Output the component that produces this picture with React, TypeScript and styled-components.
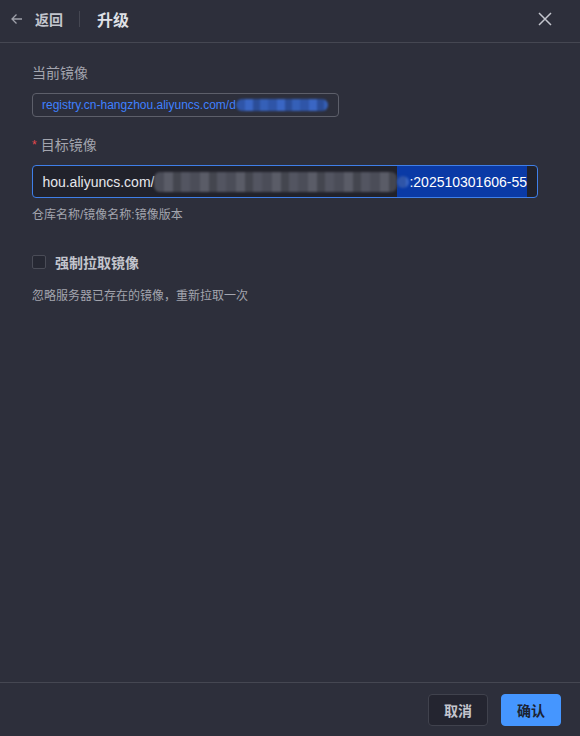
import styled, { createGlobalStyle } from "styled-components";

const GlobalStyle = createGlobalStyle`
    html, body {
        margin: 0;
        padding: 0;
        background: #2d2f3b;
    }
    #root {
        height: 736px;
    }
    * {
        box-sizing: border-box;
    }
`;

const Drawer = styled.div`
    height: 736px;
    display: flex;
    flex-direction: column;
    background-color: #2d2f3b;
    font-family: "Liberation Sans", "Noto Sans CJK SC", sans-serif;
    color: #c9cbd3;
`;

const Header = styled.div`
    height: 43px;
    flex-shrink: 0;
    display: flex;
    align-items: center;
    padding: 0 10px 4px 10px;
    border-bottom: 1px solid #454752;
`;

const BackLink = styled.div`
    display: flex;
    align-items: center;
    gap: 11px;
    font-size: 14px;
    font-weight: bold;
    color: #c3c5cd;
`;

const Divider = styled.div`
    width: 1px;
    height: 16px;
    background-color: #454752;
    margin: 0 17px 0 16px;
`;

const Title = styled.h2`
    margin: 0;
    font-size: 16px;
    font-weight: bold;
    color: #dfe0e6;
    flex: 1;
`;

const CloseButton = styled.div`
    width: 16px;
    height: 16px;
    margin-right: 17px;
    display: flex;
    align-items: center;
    justify-content: center;
`;

const Body = styled.div`
    flex: 1;
    padding: 20px 42px 0 32px;
`;

const Field = styled.div<{ gap?: number }>`
    margin-bottom: ${(p) => p.gap ?? 20}px;
`;

const Label = styled.div`
    font-size: 14px;
    color: #a3a5ae;
    line-height: 20px;
    margin-bottom: 10px;
    display: flex;
    align-items: center;
`;

const Star = styled.span`
    color: #e5484d;
    margin-right: 4px;
    font-size: 12px;
`;

const ReadonlyBox = styled.div`
    width: 307px;
    height: 24px;
    border: 1px solid #5d5f6a;
    border-radius: 4px;
    padding: 0 9px;
    display: flex;
    align-items: center;
    overflow: hidden;
    white-space: nowrap;
    font-size: 12px;
    color: #3f80ff;
`;

const InputBox = styled.div`
    width: 506px;
    height: 33px;
    border: 1px solid #3f7fe8;
    border-radius: 4px;
    background-color: #21222b;
    padding: 0 10px 0 10px;
    display: flex;
    align-items: center;
    justify-content: flex-end;
    overflow: hidden;
    white-space: nowrap;
    font-size: 14px;
    color: #e6e7ec;
`;

const Mosaic = styled.span<{ w: number; tone: "gray" | "blue" }>`
    display: inline-block;
    flex-shrink: 0;
    width: ${(p) => p.w}px;
    height: ${(p) => (p.tone === "blue" ? 12 : 20)}px;
    border-radius: 6px;
    filter: blur(0.8px);
    background: ${(p) =>
        p.tone === "blue"
            ? `repeating-linear-gradient(90deg, #2f55a8 0 9px, #3a66c4 9px 17px, #2b4d98 17px 24px, #3560b8 24px 32px)`
            : `repeating-linear-gradient(90deg, #4b4d58 0 10px, #5a5c67 10px 19px, #44464f 19px 27px, #535561 27px 36px)`};
`;

const Selected = styled.span`
    display: flex;
    align-items: center;
    background-color: #0a3aa6;
    color: #ffffff;
    height: 31px;
    flex-shrink: 0;
`;

const Help = styled.div<{ top?: number }>`
    font-size: 12px;
    color: #a3a5ae;
    margin-top: ${(p) => p.top ?? 7}px;
`;

const CheckRow = styled.label`
    display: flex;
    align-items: center;
    gap: 9px;
    margin-top: 30px;
    font-size: 14px;
    font-weight: bold;
    color: #c3c5cd;
`;

const CheckBox = styled.span`
    width: 14px;
    height: 14px;
    border: 1px solid #4a4c57;
    border-radius: 2px;
    background-color: #262833;
`;

const Footer = styled.div`
    height: 54px;
    flex-shrink: 0;
    border-top: 1px solid #454752;
    display: flex;
    align-items: center;
    justify-content: flex-end;
    gap: 13px;
    padding: 0 19px 0 0;
`;

const Button = styled.button<{ primary?: boolean }>`
    width: 60px;
    height: 32px;
    border-radius: 4px;
    font-family: inherit;
    font-size: 14px;
    font-weight: bold;
    cursor: pointer;
    border: 1px solid ${(p) => (p.primary ? "#4596ff" : "#40424d")};
    background-color: ${(p) => (p.primary ? "#4596ff" : "#242530")};
    color: ${(p) => (p.primary ? "#1c2331" : "#c3c5cd")};
`;

const App = () => {
    return (
        <>
            <GlobalStyle />
            <Drawer>
                <Header>
                    <BackLink>
                        <svg width="14" height="14" viewBox="0 0 14 14" fill="none">
                            <path
                                d="M12 7H2M6.5 2.5L2 7l4.5 4.5"
                                stroke="#9fa1aa"
                                strokeWidth="1.3"
                            />
                        </svg>
                        返回
                    </BackLink>
                    <Divider />
                    <Title>升级</Title>
                    <CloseButton>
                        <svg width="14" height="14" viewBox="0 0 14 14" fill="none">
                            <path
                                d="M1 1l12 12M13 1L1 13"
                                stroke="#c3c5cd"
                                strokeWidth="1.5"
                            />
                        </svg>
                    </CloseButton>
                </Header>

                <Body>
                    <Field gap={18}>
                        <Label>当前镜像</Label>
                        <ReadonlyBox>
                            registry.cn-hangzhou.aliyuncs.com/d
                            <Mosaic w={92} tone="blue" />
                        </ReadonlyBox>
                    </Field>

                    <Field>
                        <Label>
                            <Star>*</Star>目标镜像
                        </Label>
                        <InputBox>
                            hou.aliyuncs.com/
                            <Mosaic w={243} tone="gray" />
                            <Selected>
                                <Mosaic w={12} tone="blue" />
                                :202510301606-55
                            </Selected>
                        </InputBox>
                        <Help>仓库名称/镜像名称:镜像版本</Help>

                        <CheckRow>
                            <CheckBox />
                            强制拉取镜像
                        </CheckRow>
                        <Help top={14}>忽略服务器已存在的镜像，重新拉取一次</Help>
                    </Field>
                </Body>

                <Footer>
                    <Button>取消</Button>
                    <Button primary>确认</Button>
                </Footer>
            </Drawer>
        </>
    );
};

export default App;
